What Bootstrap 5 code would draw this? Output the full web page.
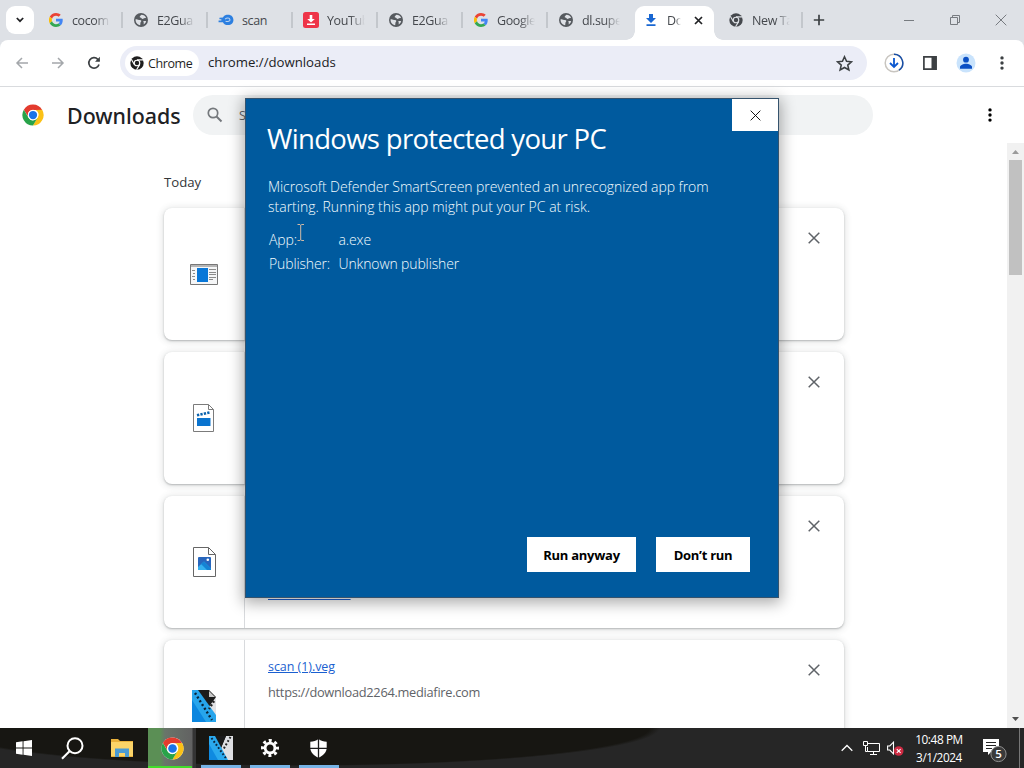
<!DOCTYPE html>
<html lang="en">
<head>
  <meta charset="UTF-8" />
  <meta name="viewport" content="width=device-width, initial-scale=1.0" />
  <title>Downloads</title>
  <link href="https://cdn.jsdelivr.net/npm/bootstrap@5.3.3/dist/css/bootstrap.min.css" rel="stylesheet">
  <style>
    body {
      font-family: "Open Sans", "Noto Sans", sans-serif;
      font-size: 12.5px;
      line-height: 1.2;
      color: #202124;
      height: 768px;
      overflow: hidden;
    }
    svg { display: block; flex: none; }

    /* tab strip */
    .tab-strip { height: 40px; background: #dee1e6; }
    .tab-search { width: 28px; height: 28px; margin: 0 3px 0 6px; border-radius: 9px; background: #fff; }
    .tab-item { width: 85px; height: 40px; padding-left: 12px; color: #45484d; }
    .tab-item svg { width: 14px; height: 14px; }
    .tab-label {
      flex: none; width: 38px; margin-left: 9px; overflow: hidden; white-space: nowrap; letter-spacing: -.4px;
      -webkit-mask-image: linear-gradient(90deg, #000 60%, transparent);
      mask-image: linear-gradient(90deg, #000 60%, transparent);
    }
    .tab-rule { flex: none; width: 2px; height: 16px; margin: 0 -2px 0 11px; background: #c3c7cc; }
    .tab-front { background: #fff; width: 79px; height: 34px; margin: 6px 3px 0; padding: 0 0 6px 9px; border-radius: 9px 9px 0 0; position: relative; }
    .tab-front .tab-label { width: 14px; margin-right: 13px; }
    .tab-front::before, .tab-front::after { content: ""; position: absolute; bottom: 0; width: 9px; height: 9px; }
    .tab-front::before { left: -9px; background: radial-gradient(circle at 0 0, transparent 8.5px, #fff 9px); }
    .tab-front::after { right: -9px; background: radial-gradient(circle at 100% 0, transparent 8.5px, #fff 9px); }
    .win-btns { gap: 34px; margin-right: 17px; }

    /* toolbar */
    .tool-wrap { background: #dee1e6; }
    .toolbar { height: 47px; background: #fff; border-bottom: 1px solid #d9dbde; border-radius: 8px 8px 0 0; }
    .omnibox { width: 747px; height: 34px; margin-left: 19px; padding: 0 14px 0 5px; border-radius: 17px; background: #ebedf7; }
    .origin-chip { height: 26px; width: 74px; padding-left: 5px; border-radius: 13px; background: #fff; color: #1f1f1f; }

    /* downloads page */
    .page-head { height: 56px; padding-left: 22px; }
    .page-title { font-family: "Noto Sans", "Open Sans", sans-serif; font-size: 21.4px; font-weight: 500; width: 126px; margin-left: 23px; padding-top: 2px; white-space: nowrap; }
    .search-pill { width: 680px; height: 40px; padding-left: 14px; border-radius: 20px; background: #f1f3f4; color: #5f6368; }
    .dl-list { width: 680px; margin-left: 164px; }
    .day-head { height: 65px; padding-top: 32px; font-size: 13.2px; color: #333639; }
    .dl-card { height: 132px; margin-bottom: 12px; border-radius: 8px; box-shadow: 0 1px 2px rgba(60, 64, 67, .32), 0 1px 6px 2px rgba(60, 64, 67, .12); background: #fff; flex: none; }
    .dl-icon { width: 81px; border-right: 1px solid #d8dadd; }
    .dl-info { padding: 19px 0 0 23px; }
    .dl-info a { color: #1a5fd0; font-size: 12.5px; font-weight: 500; letter-spacing: -.05px; }
    .dl-url { color: #5f6368; font-size: 12.8px; margin-top: 11px; letter-spacing: -.28px; }
    .dl-close { margin: 24px 24px 0 0; }
    .scroll-track { width: 17px; background: #f1f1f1; }
    .scroll-thumb { width: 13px; height: 115px; background: #c1c1c1; }

    /* smartscreen dialog */
    .smart-dialog {
      position: absolute; left: 245px; top: 98px; width: 534px; height: 500px;
      background: #005a9e; border: 1px solid #35536d; color: #f4fcff;
      box-shadow: 0 3px 14px 2px rgba(0, 0, 0, .33);
    }
    .smart-close { width: 46px; height: 32px; background: #fff; }
    .smart-text { padding: 24px 0 0 21px; margin-right: -80px; white-space: nowrap; font-weight: 330; }
    .smart-text h1 { font-size: 27.5px; font-weight: 400; line-height: 34px; margin: -1px 0 21px; color: #fff; letter-spacing: -.67px; }
    .smart-text p { font-size: 14px; line-height: 20px; margin: 0 0 11px 1px; letter-spacing: -.07px; }
    .fact { font-size: 14px; line-height: 24px; margin-left: 2px; letter-spacing: -.13px; }
    .fact-key { width: 69.500px; }
    .smart-btn { height: 35px; border: 0; background: #fff; color: #000; font-weight: 700; font-size: 13px; padding: 2px 0 0; letter-spacing: -.26px; }
    .text-cursor { position: absolute; left: 297px; top: 224px; }

    /* taskbar */
    .taskbar { height: 40px; background: radial-gradient(ellipse 360px 38px at 300px 0, #171612 97%, transparent 100%), #262626; color: #fff; }
    .task-slot { width: 49px; height: 40px; }
    .task-open::after { content: ""; position: absolute; left: 5px; right: 4px; bottom: 0; height: 3px; background: #76b3e6; }
    .task-chrome { width: 48px; padding-left: 1px; background: linear-gradient(90deg, #5b8f55 0 12px, #69756a 17px, #626262 44px, #343434 45px); }
    .task-chrome::after { content: ""; position: absolute; left: 0; right: 4px; bottom: 0; height: 2px; background: #42dd2b; }
    .clock { width: 60px; font-size: 11.8px; line-height: 18px; letter-spacing: -.4px; text-align: center; white-space: nowrap; }
    .note-icon { width: 26px; height: 30px; }
    .show-desk { width: 1px; height: 40px; background: #777; margin: 0 4px 0 11px; }
  </style>
</head>
<body class="d-flex flex-column">

  <!-- shared icons -->
  <svg width="0" height="0" class="position-absolute">
    <symbol id="i-google" viewBox="0 0 48 48">
      <path fill="#EA4335" d="M24 9.500c3.500 0 6.700 1.200 9.200 3.600l6.900-6.900C35.900 2.400 30.500 0 24 0 14.600 0 6.500 5.400 2.600 13.200l8 6.200C12.400 13.700 17.700 9.500 24 9.500z"/>
      <path fill="#4285F4" d="M47 24.500c0-1.600-.2-3.100-.4-4.500H24v9h12.900c-.6 3-2.300 5.500-4.800 7.200l7.700 6C44.400 38 47 31.800 47 24.500z"/>
      <path fill="#FBBC05" d="M10.500 28.600a14.500 14.500 0 0 1 0-9.200l-8-6.200a24 24 0 0 0 0 21.600z"/>
      <path fill="#34A853" d="M24 48c6.500 0 11.900-2.100 15.900-5.800l-7.700-6c-2.200 1.500-4.900 2.300-8.200 2.300-6.300 0-11.600-4.200-13.500-9.900l-8 6.200C6.500 42.600 14.600 48 24 48z"/>
    </symbol>
    <symbol id="i-globe" viewBox="0 0 16 16">
      <circle cx="8" cy="8" r="8" fill="#565a5f"/>
      <path fill="#dee1e6" d="M1.800 7.200C3.600 6.500 5 8 6.800 8s2 1.300 1 2.200c-.8.700-.2 1.800-.8 3.900C3.800 13.600 1.600 10.800 1.800 7.200zM8.500 2C11 2 13 3.400 13.800 5.500c-1 .6-1.800.2-2.800.9S9.200 7.200 8.600 6 6.200 5.800 6.500 4.400 7.600 3 8.500 2zM11 9.200c1-.4 2-.1 2.900.2-.4 1.500-1.400 2.800-2.800 3.600-.2-1 .3-1.500 0-2.200s-.7-1.200-.1-1.600z"/>
    </symbol>
    <symbol id="i-chrome" viewBox="0 0 48 48">
      <circle cx="24" cy="24" r="23" fill="#fff"/>
      <path fill="#E33B2E" d="M4 12.500A23 23 0 0 1 44 13H24a11.500 11.500 0 0 0-10.300 6.500L13.500 28z"/>
      <path fill="#FBC116" d="M44 12.500A23 23 0 0 1 24 47l10-17.300A11.500 11.500 0 0 0 30 13z"/>
      <path fill="#28A349" d="M4 12.500l10 17.200a11.500 11.500 0 0 0 13.500 5.400L34 30 24 47A23 23 0 0 1 4 12.500z"/>
      <circle cx="24" cy="24" r="11.500" fill="#fff"/>
      <circle cx="24" cy="24" r="9" fill="#1A73E8"/>
    </symbol>
    <symbol id="i-chrome-mono" viewBox="0 0 48 48">
      <circle cx="24" cy="24" r="23" fill="currentColor"/>
      <circle cx="24" cy="24" r="9.500" fill="none" stroke="var(--gap, #fff)" stroke-width="4"/>
      <path d="M24 13.500h21M14.800 29L4.500 11M33 29.500L22.500 47" stroke="var(--gap, #fff)" stroke-width="4"/>
    </symbol>
    <symbol id="i-cross" viewBox="0 0 12 12">
      <path d="M.7.7l10.600 10.600M11.300.7L.7 11.300" fill="none" stroke="currentColor"/>
    </symbol>
    <symbol id="i-dots" viewBox="0 0 4 16">
      <circle cx="2" cy="2.900" r="1.700"/><circle cx="2" cy="8" r="1.700"/><circle cx="2" cy="13.100" r="1.700"/>
    </symbol>
    <symbol id="i-vegas" viewBox="0 0 24 24">
      <path d="M17 0h7v24h-6l-6-12z" fill="#dedfe2"/>
      <path d="M6 0h11l-5 12z" fill="#1a1a1a"/>
      <path d="M0 0h6l13 24H0z" fill="#2aa9ee"/>
      <path d="M0 8l9 16H0z" fill="#0f8ae0"/>
      <path d="M2.500 2l15 21" stroke="#0b2740" stroke-width="2" stroke-dasharray="1.800 2"/>
      <path d="M21.500 1L14 14" stroke="#222" stroke-width="2" stroke-dasharray="1.800 2"/>
    </symbol>
  </svg>

  <div class="tab-strip d-flex align-items-center flex-shrink-0">
    <div class="tab-search d-flex align-items-center justify-content-center">
      <svg width="8" height="6" viewBox="0 0 8 6"><path d="M.8 1L4 4.200 7.200 1" fill="none" stroke="#202124" stroke-width="1.700"/></svg>
    </div>
    <div class="tab-item d-flex align-items-center"><svg><use href="#i-google"/></svg><span class="tab-label">cocom</span><span class="tab-rule"></span></div>
    <div class="tab-item d-flex align-items-center"><svg><use href="#i-globe"/></svg><span class="tab-label">E2Gua</span><span class="tab-rule"></span></div>
    <div class="tab-item d-flex align-items-center">
      <svg viewBox="0 0 16 14" style="overflow: visible"><path d="M4.500 4C6 1.500 8 1 10.500 1c3.500 0 6 2.500 6 6s-2.600 5.800-6 5.800c-3 0-5-1-6-3.300H-.5V7.600h3.200V6H.5V4.500z" fill="#2c7fe0"/><path d="M7 6c2-1.800 5-1.500 5.500.5S9.800 9.200 7.500 8.500" fill="none" stroke="#b9d3f2" stroke-width="1.200"/></svg>
      <span class="tab-label" style="-webkit-mask-image: none; mask-image: none">scan</span><span class="tab-rule"></span>
    </div>
    <div class="tab-item d-flex align-items-center">
      <svg viewBox="1 1 14 14" style="overflow: visible"><rect width="16" height="16" rx="2.500" fill="#ee3448"/><path d="M6.700 3h2.600v4h2.500L8 10.500 4.200 7h2.500zM4 11.500h8V13H4z" fill="#fff"/></svg>
      <span class="tab-label">YouTub</span><span class="tab-rule"></span>
    </div>
    <div class="tab-item d-flex align-items-center"><svg><use href="#i-globe"/></svg><span class="tab-label">E2Gua</span><span class="tab-rule"></span></div>
    <div class="tab-item d-flex align-items-center"><svg><use href="#i-google"/></svg><span class="tab-label">Google</span><span class="tab-rule"></span></div>
    <div class="tab-item d-flex align-items-center"><svg><use href="#i-globe"/></svg><span class="tab-label">dl.supe</span></div>
    <div class="tab-item tab-front d-flex align-items-center">
      <svg viewBox="0 0 14 14"><path d="M5 1h4v4h3L7 10 2 5h3zM2.500 11.300h9V13h-9z" fill="#1967d2"/></svg>
      <span class="tab-label">Do</span>
      <svg style="width: 9px; height: 9px" viewBox="0 0 9 9"><path d="M1 1l7 7M8 1L1 8" stroke="#202124" stroke-width="1.700"/></svg>
    </div>
    <div class="tab-item d-flex align-items-center" style="--gap: #dee1e6"><svg><use href="#i-chrome-mono"/></svg><span class="tab-label">New Ta</span><span class="tab-rule"></span></div>
    <svg width="14" height="12" viewBox="0 0 14 12" style="margin-left: 10px"><path d="M7 .8v10.400M1.800 6h10.400" stroke="#3c4043" stroke-width="1.700"/></svg>
    <div class="win-btns d-flex align-items-center ms-auto">
      <svg width="12" height="12" viewBox="0 0 12 12"><path d="M1 6.500h10" stroke="#777b80"/></svg>
      <svg width="12" height="12" viewBox="0 0 12 12"><path d="M1.500 3.500h7v7h-7zM3.500 3.500v-2h7v7h-2" fill="none" stroke="#777b80"/></svg>
      <svg width="12" height="12" color="#777b80"><use href="#i-cross"/></svg>
    </div>
  </div>

  <div class="tool-wrap flex-shrink-0">
    <div class="toolbar d-flex align-items-center">
      <svg width="14" height="14" viewBox="0 0 14 14" style="margin-left: 15px"><path d="M13 7H2M7 2L2 7l5 5" fill="none" stroke="#a4a7ab" stroke-width="1.500"/></svg>
      <svg width="14" height="14" viewBox="0 0 14 14" style="margin-left: 22px"><path d="M1 7h11M7 2l5 5-5 5" fill="none" stroke="#a4a7ab" stroke-width="1.500"/></svg>
      <svg width="14" height="14" viewBox="0 0 14 14" style="margin-left: 22px"><path d="M12 8.500A5.200 5.200 0 1 1 10.800 3.300L12 4.700" fill="none" stroke="#3c4043" stroke-width="1.700"/><path d="M12.900.8v5H8z" fill="#3c4043"/></svg>
      <div class="omnibox d-flex align-items-center">
        <div class="origin-chip d-flex align-items-center"><svg width="14" height="14"><use href="#i-chrome-mono"/></svg><span style="margin-left: 4px; letter-spacing: -.4px">Chrome</span></div>
        <span style="margin-left: 9px; font-size: 13.2px">chrome://downloads</span>
        <svg class="ms-auto" width="17" height="17" viewBox="0 0 24 24"><path d="M12 2.500l2.900 6.400 7 .7-5.300 4.700 1.600 6.900-6.200-3.600-6.200 3.600 1.600-6.900L2.100 9.600l7-.7z" fill="none" stroke="#3c4043" stroke-width="2.200"/></svg>
      </div>
      <svg width="20" height="20" viewBox="0 0 20 20" style="margin-left: 17px"><circle cx="10" cy="10" r="8.800" fill="none" stroke="#c8c5c0" stroke-width="1.500"/><path d="M10 1.200a8.800 8.800 0 0 1 5 16" fill="none" stroke="#174ea6" stroke-width="1.500"/><path d="M10 5v9M6 10l4 4 4-4" fill="none" stroke="#0b57d0" stroke-width="1.800"/></svg>
      <svg width="14" height="14" viewBox="0 0 14 14" style="margin-left: 19px"><path d="M.9.900h12.200v12.200H.9z" fill="none" stroke="#3c4043" stroke-width="1.700"/><path d="M8.500 1H13v12H8.500z" fill="#3c4043"/></svg>
      <svg width="20" height="20" viewBox="0 0 20 20" style="margin-left: 19px"><circle cx="10" cy="10" r="9.500" fill="#c9e3fc"/><circle cx="10" cy="6.700" r="2.900" fill="#0b4fc4"/><path d="M4 15.800v-1.700c0-2 3.500-3.300 6-3.300s6 1.300 6 3.300v1.700z" fill="#0b4fc4"/></svg>
      <svg width="4" height="16" style="margin-left: 24px" fill="#3c4043"><use href="#i-dots"/></svg>
    </div>
  </div>

  <main class="flex-grow-1 d-flex flex-column overflow-hidden bg-white">
    <div class="page-head d-flex align-items-center flex-shrink-0">
      <svg width="22" height="22"><use href="#i-chrome"/></svg>
      <div class="page-title">Downloads</div>
      <div class="search-pill d-flex align-items-center">
        <svg width="16" height="16" viewBox="0 0 16 16"><circle cx="6" cy="6" r="4.700" fill="none" stroke="#74787c" stroke-width="1.700"/><path d="M9.500 9.500l5 5" stroke="#74787c" stroke-width="1.900"/></svg>
        <span style="margin-left: 16px; letter-spacing: -1.500px">Sear</span>
      </div>
      <svg width="4" height="16" style="margin-left: 115px"><use href="#i-dots"/></svg>
    </div>

    <div class="d-flex flex-grow-1 overflow-hidden" style="min-height: 0">
      <div class="dl-list d-flex flex-column">
        <div class="day-head flex-shrink-0">Today</div>
        <div class="dl-card d-flex">
          <div class="dl-icon d-flex align-items-center justify-content-center">
            <svg width="28" height="21" viewBox="0 0 28 21"><path d="M.5.500h27v20H.5z" fill="#f5f6f7" stroke="#777"/><path d="M1 2h26" stroke="#b5b5b5" stroke-width="2"/><path d="M7 4h11v14H7z" fill="#0877d8"/><path d="M2 6.500h3M3 9.500h2M2 12.500h3M3 15.500h2M19 5.500h7M19 8.500h7M19 10.500h7M19 13.500h7M19 15.500h4" stroke="#8b8b8b"/></svg>
          </div>
          <svg class="dl-close ms-auto" width="12" height="12" color="#5f6368" stroke-width="1.500"><use href="#i-cross"/></svg>
        </div>
        <div class="dl-card d-flex">
          <div class="dl-icon d-flex align-items-center justify-content-center">
            <svg width="22" height="28" viewBox="0 0 22 28"><path d="M.5.500h15l5 5v22H.5z" fill="#fff" stroke="#7b7b7b"/><path d="M15.500.5v5h5" fill="none" stroke="#7b7b7b"/><path d="M4 14h13.500v8H4z" fill="#0a74cf"/><path d="M4 11.300l13-3" stroke="#0a62ad" stroke-width="2.600" stroke-dasharray="2.300 1.200"/></svg>
          </div>
          <svg class="dl-close ms-auto" width="12" height="12" color="#5f6368" stroke-width="1.500"><use href="#i-cross"/></svg>
        </div>
        <div class="dl-card d-flex">
          <div class="dl-icon d-flex align-items-center justify-content-center">
            <svg width="23" height="30" viewBox="0 0 23 30"><path d="M.5.500h15l7 7v22H.5z" fill="#fff" stroke="#666"/><path d="M15.500.5v7h7" fill="none" stroke="#666"/><rect x="5" y="10" width="13" height="13" rx="1" fill="#2866bd"/><path d="M5 20l6-5.500 7 7V23H5z" fill="#35b1ef"/><path d="M11 14.500l7 7V23h-4l-6-6z" fill="#1583d4"/><circle cx="14.800" cy="12.800" r="1.300" fill="#fff"/></svg>
          </div>
          <div class="dl-info d-flex align-items-end pb-4"><a href="#" style="margin-bottom: 3px; letter-spacing: -.08px">Show in folder</a></div>
          <svg class="dl-close ms-auto" width="12" height="12" color="#5f6368" stroke-width="1.500"><use href="#i-cross"/></svg>
        </div>
        <div class="dl-card d-flex">
          <div class="dl-icon d-flex align-items-center justify-content-center">
            <svg width="24" height="32" viewBox="0 0 24 32"><path d="M0 0h17l7 7v25H0z" fill="#1c1c1c"/><path d="M24 7v24l-8-13z" fill="#e3e3e5"/><path d="M0 0h6l18 25v7H0z" fill="#27a5ec"/><path d="M0 10l14 22H0z" fill="#0b86df"/><path d="M3 3l17 27" stroke="#0a2337" stroke-width="2.400" stroke-dasharray="2 2.400"/><path d="M22 11l-5 8" stroke="#222" stroke-width="2.400" stroke-dasharray="2 2"/><path d="M17 1v6h6z" fill="#c9c9c9"/></svg>
          </div>
          <div class="dl-info">
            <a href="#">scan (1).veg</a>
            <div class="dl-url">https://download2264.mediafire.com</div>
          </div>
          <svg class="dl-close ms-auto" width="12" height="12" color="#5f6368" stroke-width="1.500"><use href="#i-cross"/></svg>
        </div>
      </div>

      <div class="scroll-track ms-auto d-flex flex-column align-items-center">
        <svg width="17" height="17" viewBox="0 0 17 17"><path d="M5 11l3.500-4L12 11z" fill="#9a9a9a"/></svg>
        <div class="scroll-thumb"></div>
        <svg class="mt-auto" width="17" height="17" viewBox="0 0 17 17"><path d="M5 6l3.500 4L12 6z" fill="#505050"/></svg>
      </div>
    </div>
  </main>

  <footer class="taskbar d-flex align-items-center flex-shrink-0">
    <div class="task-slot d-flex align-items-center justify-content-center" style="width: 48px">
      <svg width="16" height="16" viewBox="0 0 16 16"><path d="M0 2.200L6.600 1.300V7.500H0zM7.500 1.200L16 0v7.500H7.500zM0 8.400h6.600v6.300L0 13.800zM7.500 8.400H16V16l-8.500-1.200z" fill="#fff"/></svg>
    </div>
    <div class="task-slot d-flex align-items-center justify-content-center" style="width: 48px">
      <svg width="23" height="23" viewBox="0 0 23 23"><circle cx="14" cy="8.700" r="7.500" fill="none" stroke="#fff" stroke-width="2"/><path d="M8.500 14.200L1 21.700" stroke="#fff" stroke-width="2.200"/></svg>
    </div>
    <div class="task-slot d-flex align-items-center justify-content-center" style="width: 52px">
      <svg width="22" height="18" viewBox="0 0 22 18"><path d="M0 0h7l2 2h13v16H0z" fill="#e9b13b"/><path d="M0 3h22v14H0z" fill="#fbd468"/><path d="M4 18V9.500h14V18h-4v-4H8v4z" fill="#4b9bd3"/></svg>
    </div>
    <div class="task-slot task-chrome position-relative d-flex align-items-center justify-content-center">
      <svg width="23" height="23"><use href="#i-chrome"/></svg>
    </div>
    <div class="task-slot task-open position-relative d-flex align-items-center justify-content-center">
      <svg width="24" height="24"><use href="#i-vegas"/></svg>
    </div>
    <div class="task-slot task-open position-relative d-flex align-items-center justify-content-center">
      <svg width="18" height="18" viewBox="0 0 18 18"><circle cx="9" cy="9" r="7.500" fill="none" stroke="#fff" stroke-width="3" stroke-dasharray="3 2.890" stroke-dashoffset="1.500"/><circle cx="9" cy="9" r="4.900" fill="none" stroke="#fff" stroke-width="2.800"/></svg>
    </div>
    <div class="task-slot task-open position-relative d-flex align-items-center justify-content-center">
      <svg width="17" height="19" viewBox="0 0 17 19"><path d="M8.500 0C11 1.800 13.500 2.700 16.700 2.700v6c0 4.800-3.800 8-8.200 10C4.100 16.700.3 13.500.3 8.700v-6C3.500 2.700 6 1.800 8.500 0z" fill="#fff"/><path d="M8.500 0v19M0 9.300h17" stroke="#1c1c1c" stroke-width="1.300"/></svg>
    </div>

    <div class="ms-auto d-flex align-items-center">
      <svg width="12" height="8" viewBox="0 0 12 8"><path d="M.7 6.800L6 1.500l5.300 5.300" fill="none" stroke="#fff" stroke-width="1.300"/></svg>
      <svg width="17" height="14" viewBox="0 0 17 14" style="margin-left: 10px"><path d="M5 2.500h11.500v8H4.500V6M10.500 10.500v3M7 13.500h7M.5.500h4v4h-4zM2.500 4.500v6h2" fill="none" stroke="#fff"/></svg>
      <svg width="17" height="15" viewBox="0 0 17 15" style="margin-left: 7px"><path d="M.6 5h2.200l3.700-3.800v11.600L2.800 9H.6z" fill="none" stroke="#fff" stroke-width="1.100"/><circle cx="11.700" cy="10" r="4.800" fill="#ce2b43"/><path d="M9.800 8.100l3.800 3.800M13.600 8.100l-3.800 3.800" stroke="#fff" stroke-width="1.100"/></svg>
      <div class="clock" style="margin-left: 5px">10:48 PM<br>3/1/2024</div>
      <svg class="note-icon" viewBox="0 0 26 30" style="margin-left: 13px"><path d="M1 6h16v13H9l-3 3v-3H1z" fill="#fff"/><path d="M4 9.500h10M4 12.500h10M4 15.500h6" stroke="#252525" stroke-width="1.200"/><circle cx="16.500" cy="21" r="7.600" fill="#3a3a3a" stroke="#909090"/><text x="16.500" y="25.200" text-anchor="middle" font-size="11.500" fill="#fff" font-weight="600">5</text></svg>
      <div class="show-desk"></div>
    </div>
  </footer>

  <div class="smart-dialog d-flex flex-column">
    <div class="d-flex">
      <div class="smart-text flex-grow-1">
        <h1>Windows protected your PC</h1>
        <p>Microsoft Defender SmartScreen prevented an unrecognized app from<br><span style="letter-spacing: .01px">starting. Running this app might put your PC at risk.</span></p>
        <div class="fact d-flex"><div class="fact-key">App:</div><div>a.exe</div></div>
        <div class="fact d-flex"><div class="fact-key">Publisher:</div><div>Unknown publisher</div></div>
      </div>
      <div class="smart-close d-flex align-items-center justify-content-center position-relative">
        <svg width="11" height="11" color="#000"><use href="#i-cross"/></svg>
      </div>
    </div>
    <div class="d-flex mt-auto justify-content-end" style="gap: 20px; margin: 0 28px 25px 0">
      <button class="btn rounded-0 smart-btn" style="width: 109px">Run anyway</button>
      <button class="btn rounded-0 smart-btn" style="width: 94px">Don’t run</button>
    </div>
  </div>
  <svg class="text-cursor" width="8" height="17" viewBox="0 0 8 17"><path d="M.5.500h2.500l.7.700.7-.7H7M3.700 1v15M.5 16.500h2.500l.7-.7.7.7H7" fill="none" stroke="#d0b9a5"/></svg>

  <script src="https://cdn.jsdelivr.net/npm/bootstrap@5.3.3/dist/js/bootstrap.bundle.min.js"></script>
</body>
</html>
